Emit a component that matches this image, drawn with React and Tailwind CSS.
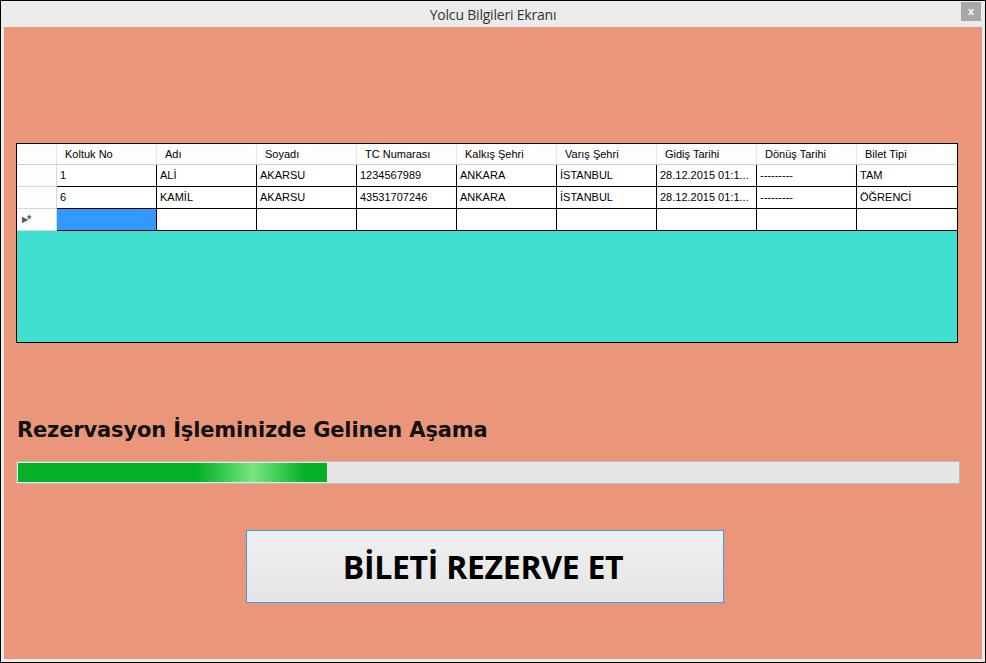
import React from "react";

const columns = [
  "Koltuk No",
  "Adı",
  "Soyadı",
  "TC Numarası",
  "Kalkış Şehri",
  "Varış Şehri",
  "Gidiş Tarihi",
  "Dönüş Tarihi",
  "Bilet Tipi",
];

const rows = [
  ["1", "ALİ", "AKARSU", "1234567989", "ANKARA", "İSTANBUL", "28.12.2015 01:1...", "---------", "TAM"],
  ["6", "KAMİL", "AKARSU", "43531707246", "ANKARA", "İSTANBUL", "28.12.2015 01:1...", "---------", "ÖĞRENCİ"],
];

export default function App() {
  return (
    <div className="w-[986px] h-[663px] border border-black bg-[#ebebeb] px-[3px] pb-[3px] flex flex-col font-['Liberation_Sans',Arial,sans-serif]">
      {/* Title bar */}
      <div className="h-[26px] shrink-0 flex items-center justify-center relative">
        <span className="text-[14px] text-[#333] font-['Open_Sans',sans-serif] tracking-[-0.2px]">
          Yolcu Bilgileri Ekranı
        </span>
        <div className="absolute right-[1px] top-[1px] w-[20px] h-[19px] bg-[#a8a8a8] flex items-center justify-center text-white text-[11px] font-bold leading-none">
          x
        </div>
      </div>

      {/* Form body */}
      <div className="flex-1 bg-[#e9967a] pt-[116px] pl-[12px] flex flex-col">
        {/* Data grid */}
        <div className="w-[942px] h-[200px] border border-black bg-[#40e0d0] flex flex-col">
          <div className="flex h-[21px] bg-[#fdfdfd] border-b border-[#d0d0d0] text-[11px] text-black">
            <div className="w-[40px] border-r border-[#e6e6e6]" />
            {columns.map((c) => (
              <div
                key={c}
                className="w-[100px] border-r border-[#e6e6e6] last:border-r-0 pl-[8px] pt-[1px] flex items-center"
              >
                {c}
              </div>
            ))}
          </div>
          {rows.map((r, i) => (
            <div key={i} className="flex h-[22px] text-[11px] text-black">
              <div className="w-[40px] bg-[#fdfdfd] border-r border-b border-[#d8d8d8]" />
              {r.map((v, j) => (
                <div
                  key={j}
                  className="w-[100px] bg-white border-r border-b border-black last:border-r-0 pl-[3px] flex items-center whitespace-nowrap overflow-hidden"
                >
                  {v}
                </div>
              ))}
            </div>
          ))}
          <div className="flex h-[22px] text-[11px]">
            <div className="w-[40px] bg-[#fdfdfd] border-r border-b border-[#d8d8d8] flex items-center pl-[5px] text-[#555] text-[11px] leading-none">
              <span className="text-[8px]">▶</span>
              <span className="-ml-[1px] font-bold">*</span>
            </div>
            {columns.map((c, j) => (
              <div
                key={c}
                className={
                  j === 0
                    ? "w-[100px] bg-[#3399ff] border-r border-b border-black"
                    : "w-[100px] bg-white border-r border-b border-black last:border-r-0"
                }
              />
            ))}
          </div>
        </div>

        {/* Progress label */}
        <div className="mt-[75px] ml-[1px] text-[21px] font-bold text-[#111] leading-[24px] font-['DejaVu_Sans',sans-serif] tracking-[-0.15px]">
          Rezervasyon İşleminizde Gelinen Aşama
        </div>

        {/* Progress bar */}
        <div className="mt-[19px] w-[944px] h-[23px] border border-[#bcbcbc] bg-[#e6e6e6] p-[1px]">
          <div className="h-full w-[309px] bg-[linear-gradient(90deg,#06b025_0%,#06b025_58%,#3fcf58_68%,#7ce47f_76%,#3fcf58_84%,#06b025_93%,#06b025_100%)]" />
        </div>

        {/* Button */}
        <button className="mt-[46px] ml-[230px] w-[478px] h-[73px] border border-[#3c9cf0] bg-[linear-gradient(180deg,#f0f0f0,#e5e5e5)] flex items-center justify-center">
          <span className="text-[32px] font-bold text-black font-['Open_Sans',sans-serif] tracking-[-0.3px] -ml-[4px]">
            BİLETİ REZERVE ET
          </span>
        </button>
      </div>
    </div>
  );
}
